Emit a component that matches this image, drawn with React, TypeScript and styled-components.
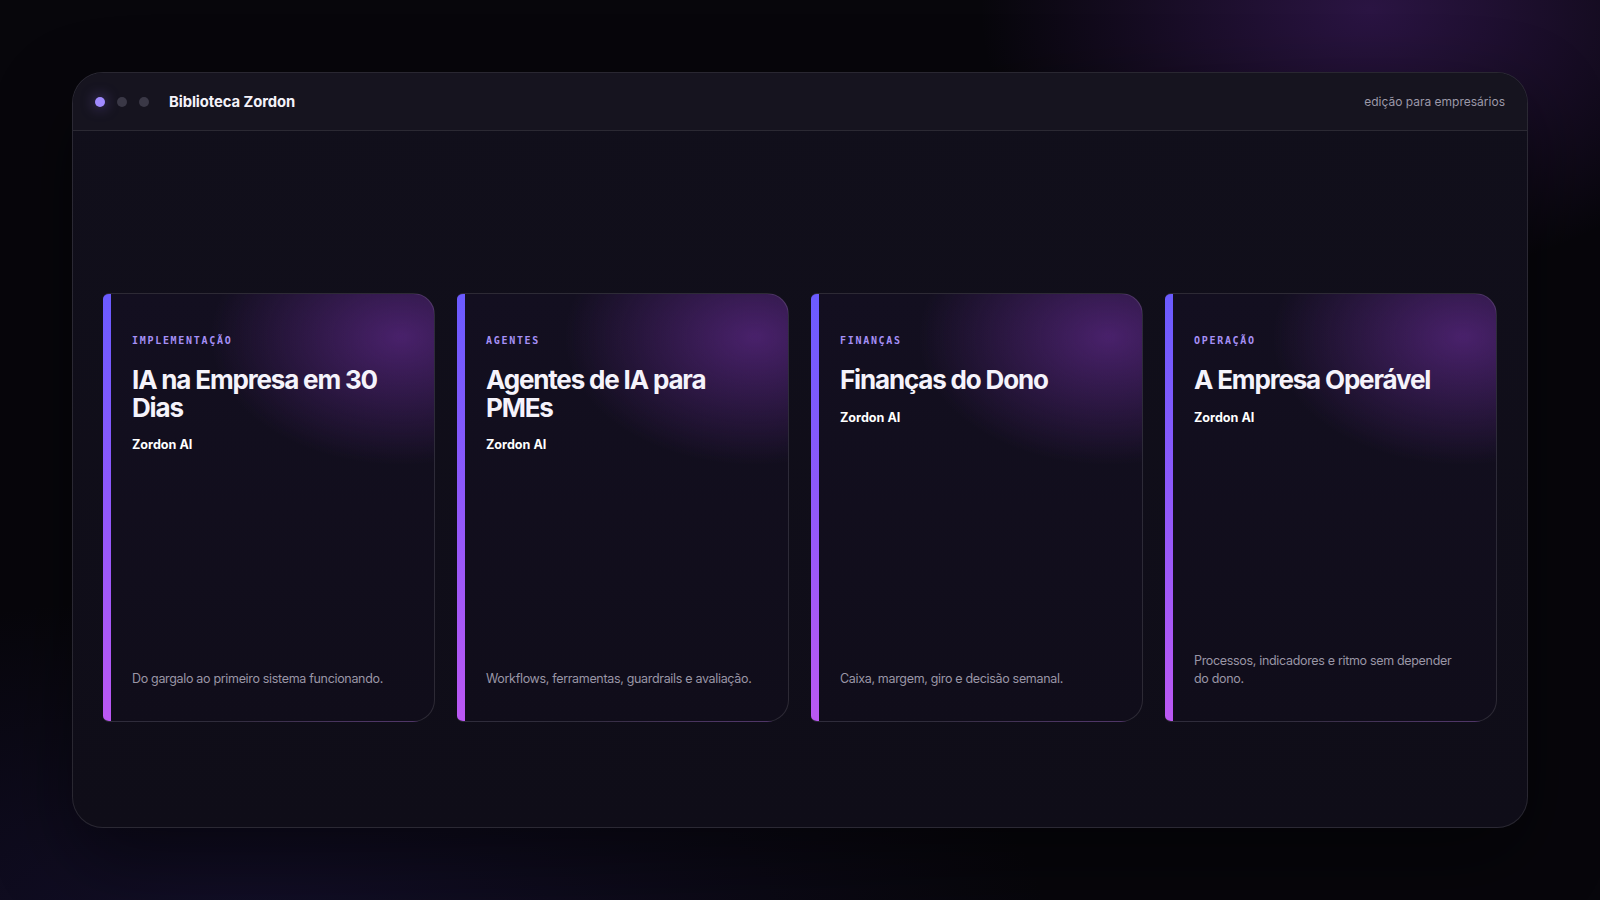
import React from "react";
import styled, { createGlobalStyle } from "styled-components";

const GlobalStyle = createGlobalStyle`
  * { box-sizing: border-box; }
  html, body { margin: 0; padding: 0; }
  body {
    width: 1600px;
    height: 900px;
    overflow: hidden;
    font-family: Inter, "Noto Sans", "Liberation Sans", sans-serif;
    background:
      radial-gradient(ellipse 520px 360px at 1370px 10px, rgba(105, 45, 165, 0.36), rgba(105, 45, 165, 0) 75%),
      radial-gradient(ellipse 1000px 420px at 250px 930px, rgba(40, 30, 95, 0.35), rgba(40, 30, 95, 0) 80%),
      #07060b;
    color: #f3f1f8;
  }
`;

const Page = styled.main`
  width: 1600px;
  height: 900px;
  padding: 72px;
`;

const Window = styled.section`
  height: 756px;
  display: flex;
  flex-direction: column;
  border: 1px solid rgba(255, 255, 255, 0.11);
  border-radius: 31px;
  background: linear-gradient(180deg, #110f1b 0%, #0f0d18 100%);
  overflow: hidden;
  box-shadow: 0 30px 80px rgba(0, 0, 0, 0.45);
`;

const TitleBar = styled.header`
  height: 58px;
  flex: none;
  display: flex;
  align-items: center;
  padding: 0 22px;
  background: #16141f;
  border-bottom: 1px solid rgba(255, 255, 255, 0.09);
`;

const Dots = styled.div`
  display: flex;
  gap: 12px;
  margin-right: 20px;
`;

const Dot = styled.span<{ $active?: boolean }>`
  width: 10px;
  height: 10px;
  border-radius: 50%;
  background: ${(p) => (p.$active ? "#a08aff" : "#3a3846")};
  box-shadow: ${(p) => (p.$active ? "0 0 14px rgba(150, 120, 255, 0.55)" : "none")};
`;

const AppName = styled.h1`
  margin: 0;
  font-size: 14.8px;
  font-weight: 700;
  color: #f4f2f9;
  letter-spacing: -0.005em;
`;

const Edition = styled.span`
  margin-left: auto;
  font-size: 12px;
  color: #9c98a8;
`;

const Shelf = styled.div`
  flex: 1;
  display: grid;
  grid-template-columns: repeat(4, 1fr);
  gap: 22px;
  padding: 162px 30px 105px;
`;

const Book = styled.article`
  display: flex;
  overflow: hidden;
  border: 1px solid rgba(255, 255, 255, 0.12);
  border-left: none;
  border-radius: 6px 22px 22px 6px;
  background:
    radial-gradient(ellipse 190px 128px at 90% 10%, rgba(88, 38, 128, 0.78), rgba(88, 38, 128, 0) 100%),
    linear-gradient(180deg, #130f20 0%, #100d1a 100%);
`;

const Spine = styled.div`
  width: 8px;
  flex: none;
  background: linear-gradient(180deg, #6b5bff 0%, #8c58fb 45%, #bb58f3 100%);
`;

const Cover = styled.div`
  flex: 1;
  display: flex;
  flex-direction: column;
  padding: 40px 28px 32px 21px;
  min-width: 0;
`;

const Category = styled.span`
  font-family: "DejaVu Sans Mono", "Liberation Mono", monospace;
  font-weight: 700;
  font-size: 10px;
  line-height: 14px;
  letter-spacing: 0.17em;
  color: #a690f6;
  text-transform: uppercase;
`;

const BookTitle = styled.h2`
  margin: 18px 0 0;
  font-size: 26px;
  line-height: 27.5px;
  font-weight: 700;
  letter-spacing: -0.045em;
  color: #f5f3fb;
`;

const Author = styled.span`
  margin-top: 15px;
  font-size: 12.6px;
  line-height: 18px;
  font-weight: 700;
  color: #ffffff;
`;

const Blurb = styled.p`
  margin: auto 0 0;
  font-size: 12.5px;
  line-height: 18.6px;
  letter-spacing: -0.026em;
  color: #9a96a6;
`;

const books = [
  {
    category: "Implementação",
    title: "IA na Empresa em 30 Dias",
    blurb: "Do gargalo ao primeiro sistema funcionando.",
  },
  {
    category: "Agentes",
    title: "Agentes de IA para PMEs",
    blurb: "Workflows, ferramentas, guardrails e avaliação.",
  },
  {
    category: "Finanças",
    title: "Finanças do Dono",
    blurb: "Caixa, margem, giro e decisão semanal.",
  },
  {
    category: "Operação",
    title: "A Empresa Operável",
    blurb: "Processos, indicadores e ritmo sem depender do dono.",
  },
];

export default function App() {
  return (
    <>
      <GlobalStyle />
      <Page>
        <Window>
          <TitleBar>
            <Dots>
              <Dot $active />
              <Dot />
              <Dot />
            </Dots>
            <AppName>Biblioteca Zordon</AppName>
            <Edition>edição para empresários</Edition>
          </TitleBar>
          <Shelf>
            {books.map((b) => (
              <Book key={b.title}>
                <Spine />
                <Cover>
                  <Category>{b.category}</Category>
                  <BookTitle>{b.title}</BookTitle>
                  <Author>Zordon AI</Author>
                  <Blurb>{b.blurb}</Blurb>
                </Cover>
              </Book>
            ))}
          </Shelf>
        </Window>
      </Page>
    </>
  );
}
